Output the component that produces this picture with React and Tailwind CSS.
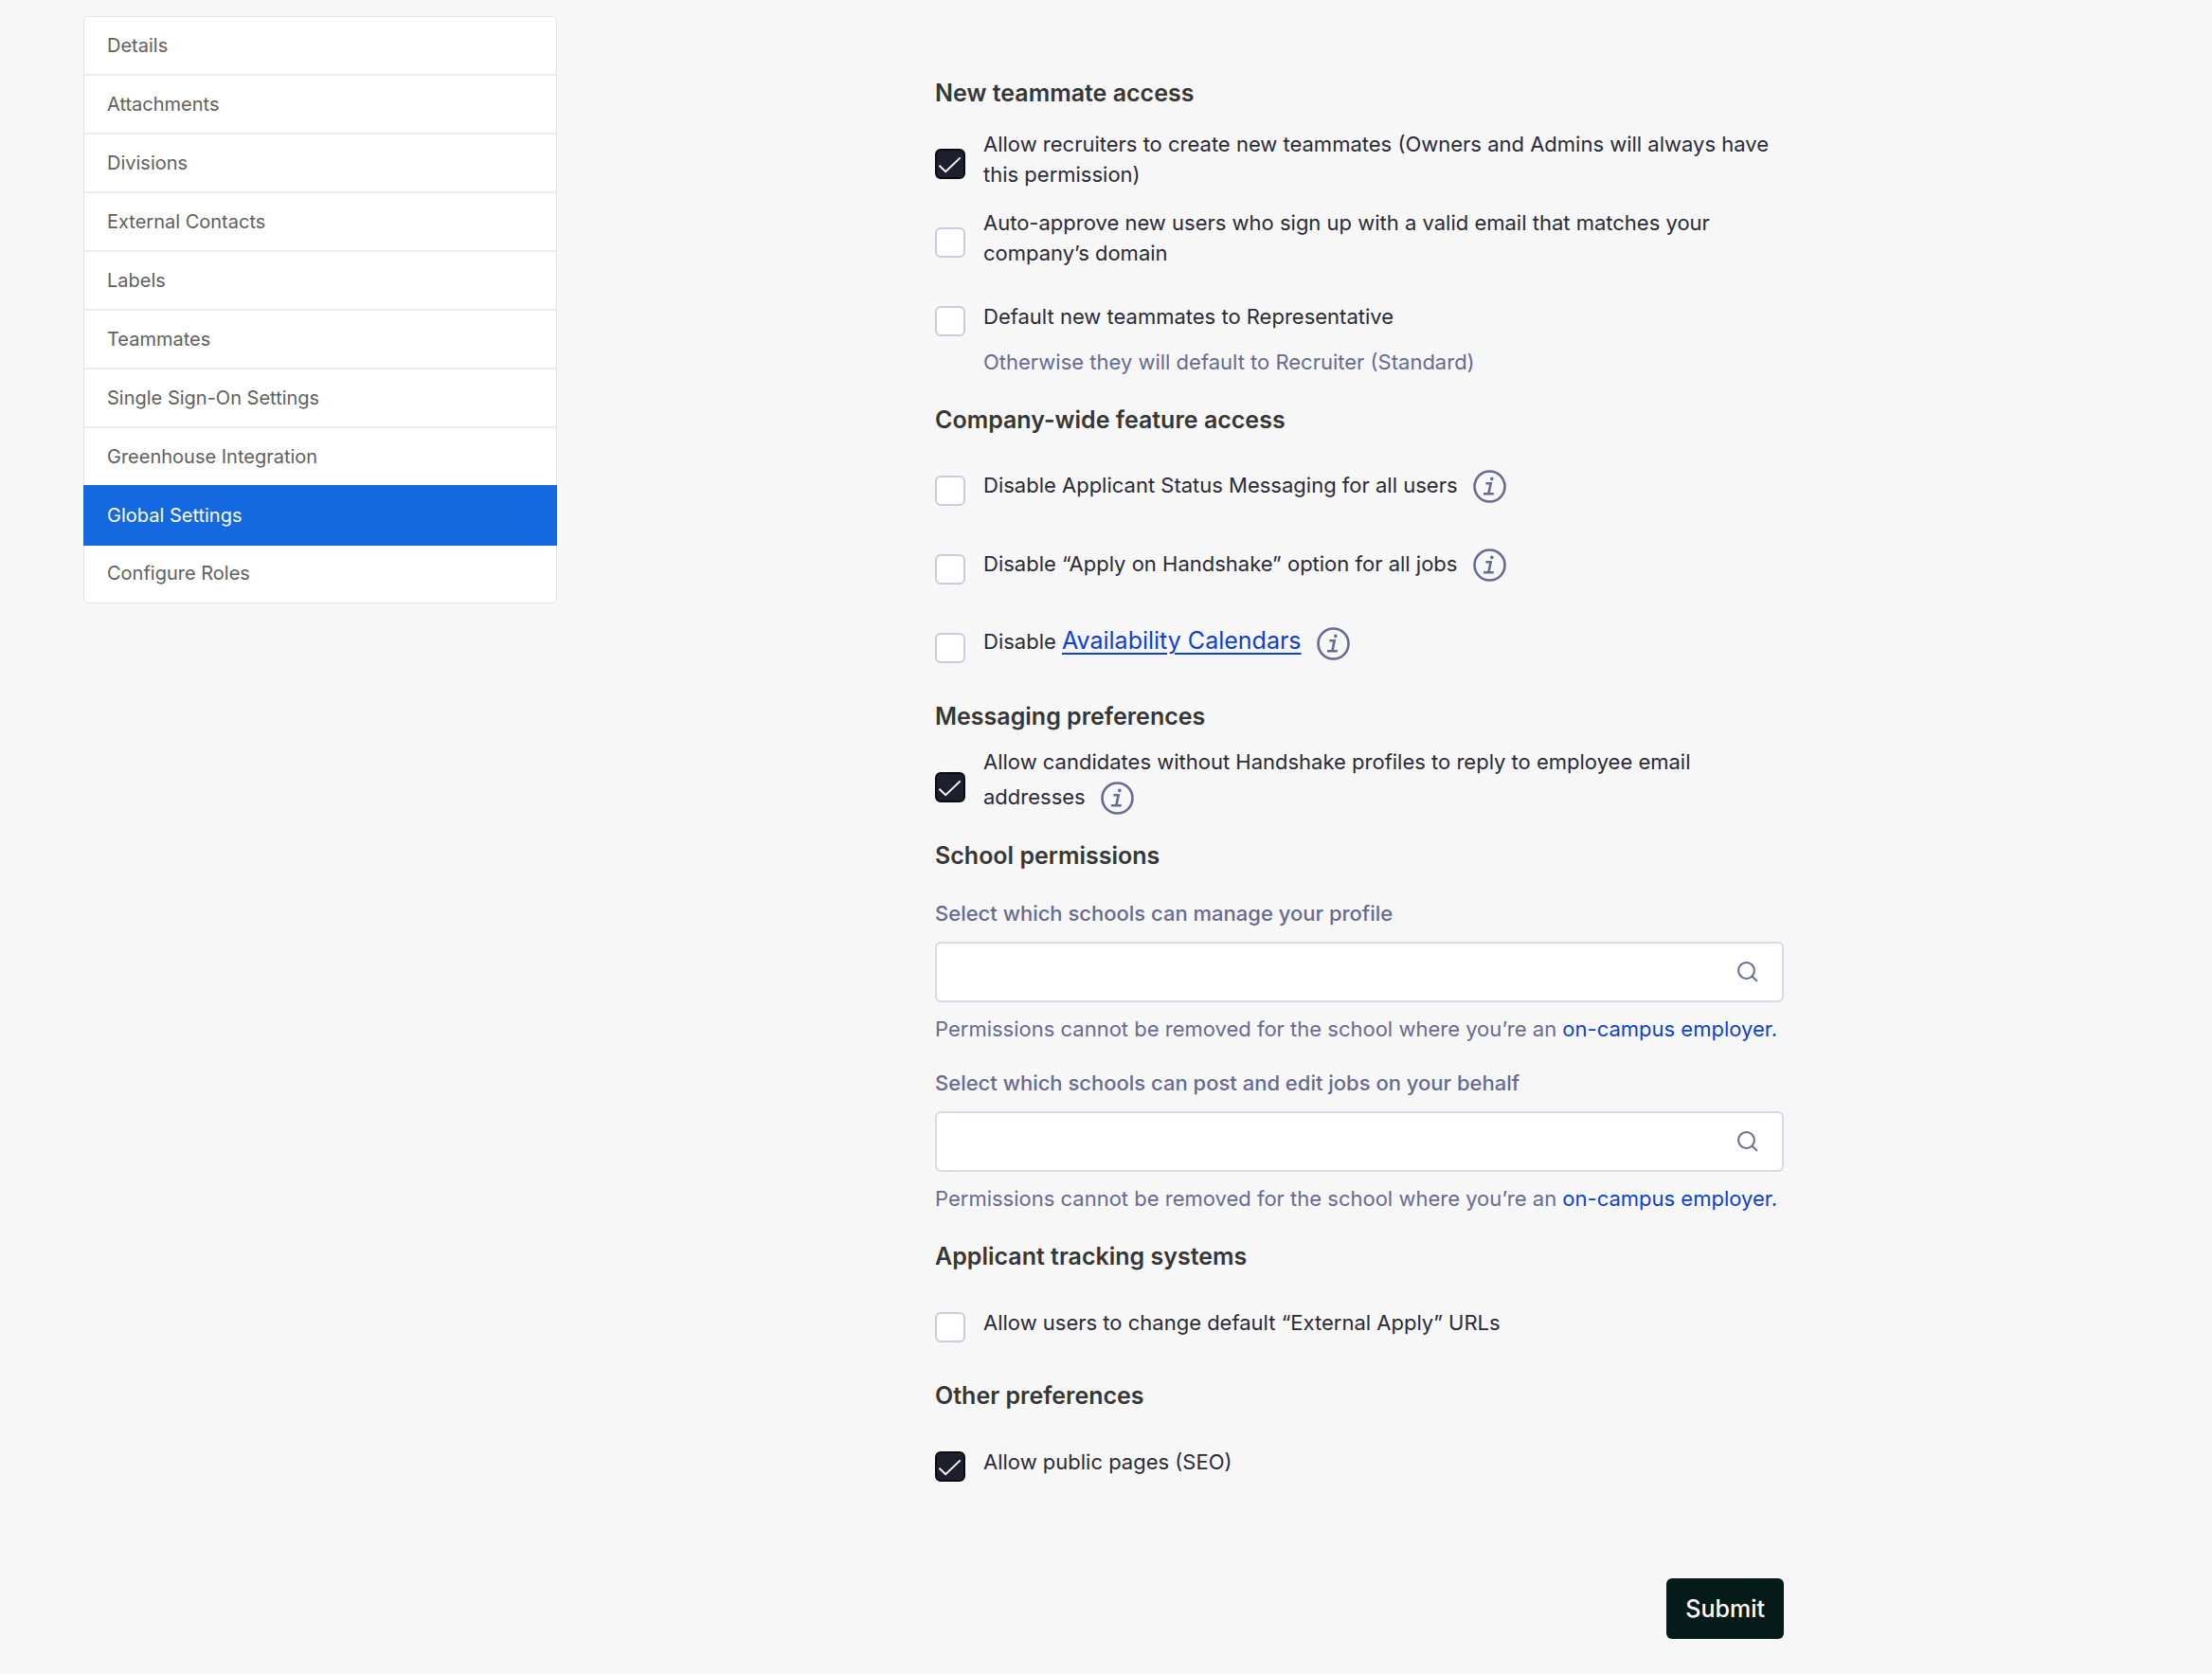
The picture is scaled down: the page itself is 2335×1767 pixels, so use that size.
import { useId, useState } from "react";

const NAV_ITEMS = [
  "Details",
  "Attachments",
  "Divisions",
  "External Contacts",
  "Labels",
  "Teammates",
  "Single Sign-On Settings",
  "Greenhouse Integration",
  "Global Settings",
  "Configure Roles",
];

function SideNav({ current }) {
  return (
    <nav aria-label="Company settings" className="w-[500px] shrink-0">
      <ul className="divide-y-2 divide-[#ececec] rounded-md border border-[#e3e3e3] bg-white text-xl text-[#606060]">
        {NAV_ITEMS.map((item) => (
          <li key={item} className="h-[62px]">
            {item === current ? (
              <a
                href="#"
                aria-current="page"
                className="relative -mx-px -mt-0.5 flex h-16 items-center bg-[#1468e0] px-[25px] text-white"
              >
                {item}
              </a>
            ) : (
              <a href="#" className="flex h-full items-center px-6">
                {item}
              </a>
            )}
          </li>
        ))}
      </ul>
    </nav>
  );
}

function InfoButton({ label }) {
  return (
    <button type="button" aria-label={label} className="my-[5px] ml-2.5 inline-block align-middle text-[#676b91]">
      <svg width="35" height="35" viewBox="0 0 35 35" fill="none" stroke="currentColor" className="block">
        <circle cx="17.5" cy="17.5" r="16" strokeWidth="2.6" />
        <path d="M13.4 14.2h5.2l-2.2 11M11 25.3h10.8" strokeWidth="2.6" />
        <circle cx="19.8" cy="9.4" r="1.8" fill="currentColor" stroke="none" />
      </svg>
    </button>
  );
}

function CheckRow({ children, info, defaultChecked = false }) {
  const id = useId();
  const [checked, setChecked] = useState(defaultChecked);
  return (
    <div className="flex min-h-16 items-center gap-[19px]">
      <div className="grid shrink-0 pt-2.5">
        <input
          id={id}
          type="checkbox"
          checked={checked}
          onChange={(e) => setChecked(e.target.checked)}
          className="col-start-1 row-start-1 size-8 appearance-none rounded-md border-2 border-[#cbcbe0] bg-white checked:border-[#0a0a12] checked:bg-[#1e1e2c]"
        />
        {checked && (
          <svg
            viewBox="0 0 32 32"
            fill="none"
            stroke="white"
            strokeWidth="2"
            className="pointer-events-none col-start-1 row-start-1 size-8"
          >
            <path d="M4.5 17.8 11.2 24.2 26.7 9.4" />
          </svg>
        )}
      </div>
      <div className="-my-2">
        <label htmlFor={id}>{children}</label>
        {info && (
          <>
            {" "}
            <InfoButton label={info} />
          </>
        )}
      </div>
    </div>
  );
}

function Section({ title, children }) {
  return (
    <section>
      <h2 className="mb-[22px] text-[25px] leading-8 font-semibold text-[#363636]">{title}</h2>
      {children}
    </section>
  );
}

function SchoolField({ label }) {
  const id = useId();
  return (
    <div>
      <label htmlFor={id} className="block font-medium text-[#676b91]">
        {label}
      </label>
      <div className="mt-3.5 flex h-16 items-center rounded-md border-2 border-[#d8d8e8] bg-white pr-[25px]">
        <input id={id} type="text" className="h-full min-w-0 flex-1 bg-transparent px-4 outline-none" />
        <svg width="22" height="22" viewBox="0 0 22 22" fill="none" stroke="#676b91" strokeWidth="2">
          <circle cx="9.5" cy="9.5" r="8.4" />
          <path d="m15.4 15.4 5.4 5.4" />
        </svg>
      </div>
      <p className="mt-3 text-[#676b91]">
        Permissions cannot be removed for the school where you’re an{" "}
        <a href="#" className="text-[#0b3fd6]">
          on-campus employer.
        </a>
      </p>
    </div>
  );
}

export default function App() {
  return (
    <div className="flex min-h-screen items-start bg-[#f7f7f7] pt-[17px] pr-[53px] pb-9 pl-[88px] font-['Inter',sans-serif]">
      <SideNav current="Global Settings" />
      <main className="min-w-0 flex-1 pt-[65px]">
        <form
          onSubmit={(e) => e.preventDefault()}
          className="mx-auto flex max-w-[896px] flex-col gap-[29px] text-[22px] leading-8 text-[#2a2a38]"
        >
          <Section title="New teammate access">
            <div className="flex flex-col gap-[19px]">
              <CheckRow defaultChecked>
                Allow recruiters to create new teammates (Owners and Admins will always have this permission)
              </CheckRow>
              <CheckRow>
                Auto-approve new users who sign up with a valid email that matches your company’s domain
              </CheckRow>
              <CheckRow>Default new teammates to Representative</CheckRow>
            </div>
            <p className="pl-[51px] text-[#676b91]">Otherwise they will default to Recruiter (Standard)</p>
          </Section>

          <Section title="Company-wide feature access">
            <div className="flex flex-col gap-[19px]">
              <CheckRow info="About applicant status messaging">
                Disable Applicant Status Messaging for all users
              </CheckRow>
              <CheckRow info="About Apply on Handshake">
                Disable “Apply on Handshake” option for all jobs
              </CheckRow>
              <CheckRow info="About availability calendars">
                Disable{" "}
                <a href="#" className="text-[25px] text-[#0b3fd6] underline decoration-2 underline-offset-4">
                  Availability Calendars
                </a>
              </CheckRow>
            </div>
          </Section>

          <Section title="Messaging preferences">
            <CheckRow defaultChecked info="About replies to employee email addresses">
              Allow candidates without Handshake profiles to reply to employee email addresses
            </CheckRow>
          </Section>

          <Section title="School permissions">
            <div className="flex flex-col gap-[25px] pt-[7px]">
              <SchoolField label="Select which schools can manage your profile" />
              <SchoolField label="Select which schools can post and edit jobs on your behalf" />
            </div>
          </Section>

          <Section title="Applicant tracking systems">
            <CheckRow>Allow users to change default “External Apply” URLs</CheckRow>
          </Section>

          <Section title="Other preferences">
            <CheckRow defaultChecked>Allow public pages (SEO)</CheckRow>
          </Section>

          <button
            type="submit"
            className="mt-[62px] self-end rounded-md bg-[#051b19] px-5 py-4 text-[25px] leading-8 font-medium text-white"
          >
            Submit
          </button>
        </form>
      </main>
    </div>
  );
}
